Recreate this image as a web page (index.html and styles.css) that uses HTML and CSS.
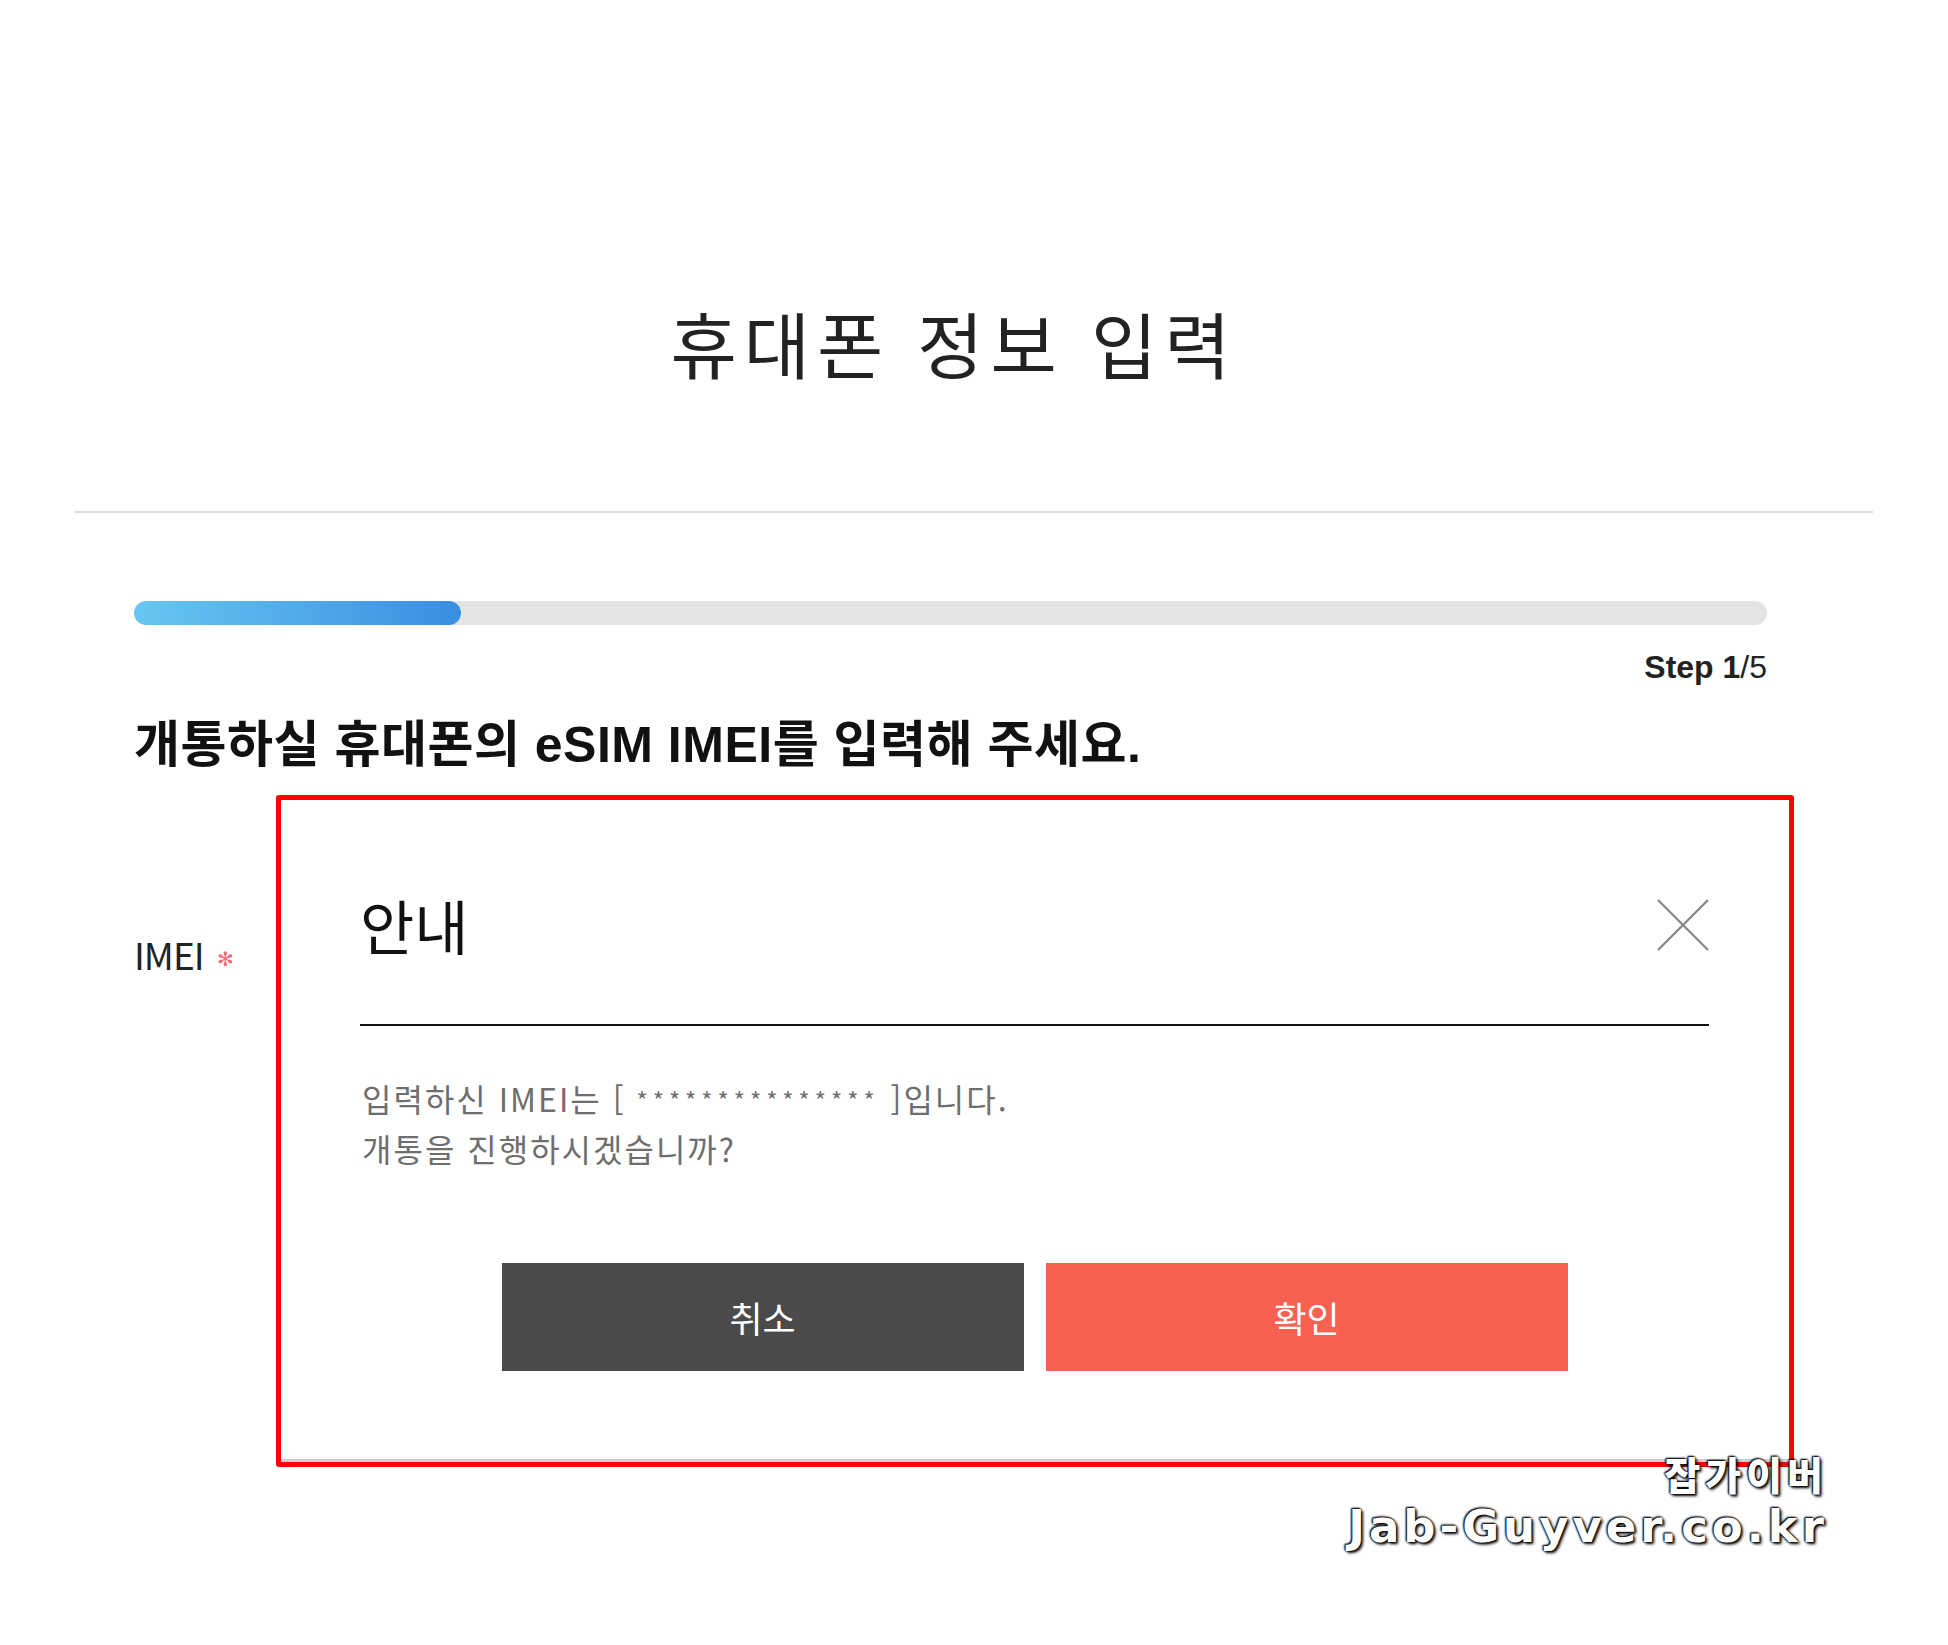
FILE: index.html
```html
<!DOCTYPE html>
<html lang="ko">
<head>
    <meta charset="utf-8">
    <meta name="viewport" content="width=device-width, initial-scale=1.0">
    <title>휴대폰 정보 입력</title>
    <link rel="stylesheet" href="styles.css">
</head>
<body>
    <div class="page">
        <!-- Page header -->
        <header class="page-header">
            <h1 class="page-title">휴대폰 정보 입력</h1>
        </header>

        <section class="step-section">
            <div class="progress">
                <div class="progress-fill" style="width: 20%;"></div>
            </div>
            <p class="step-count"><b>Step 1</b>/5</p>

            <h2 class="step-heading">개통하실 휴대폰의 eSIM IMEI를 입력해 주세요.</h2>

            <div class="field-row">
                <label class="field-label">IMEI <span class="required">✻</span></label>
            </div>
        </section>

        <!-- Confirm dialog -->
        <div class="dialog">
            <div class="dialog-inner">
                <div class="dialog-head">
                    <h3 class="dialog-title">안내</h3>
                    <button class="dialog-close" aria-label="닫기">
                        <svg width="52" height="52" viewBox="0 0 52 52">
                            <path d="M1 1 L51 51 M51 1 L1 51" stroke="#8a8a8a" stroke-width="2.4" fill="none"/>
                        </svg>
                    </button>
                </div>
                <p class="dialog-msg">
                    입력하신 IMEI는 [ <span class="mask">***************</span> ]입니다.<br>
                    개통을 진행하시겠습니까?
                </p>
                <div class="dialog-actions">
                    <button class="btn btn-cancel">취소</button>
                    <button class="btn btn-ok">확인</button>
                </div>
            </div>
        </div>

        <div class="watermark">
            <span class="wm-ko">잡가이버</span>
            <span class="wm-en">Jab-Guyver.co.kr</span>
        </div>
    </div>
</body>
</html>
```

FILE: styles.css
```css
body {
    margin: 0;
    background: #fff;
    color: #222;
    font-family: "Liberation Sans", "Noto Sans CJK KR", sans-serif;
}
.page {
    position: relative;
    width: 1948px;
    height: 1645px;
    overflow: hidden;
}
.page-header {
    margin: 0 75px;
    padding-top: 300px;
    height: 211px;
    border-bottom: 2px solid #dcdcdc;
    text-align: center;
}
.page-title {
    margin: 0 0 0 -40px;
    font-family: "Noto Sans CJK KR", sans-serif;
    font-weight: 400;
    font-size: 72px;
    line-height: 84px;
    letter-spacing: 7px;
    color: #222;
}
.step-section {
    width: 1633px;
    margin-left: 134px;
    padding-top: 88px;
}
.progress {
    height: 24px;
    border-radius: 12px;
    background: #e4e4e4;
    overflow: hidden;
}
.progress-fill {
    height: 100%;
    border-radius: 12px;
    background: linear-gradient(to right, #68c6f2, #3a8ee0);
}
.step-count {
    margin: 24px 0 0;
    text-align: right;
    font-size: 32px;
    line-height: 36px;
    color: #222;
}
.step-heading {
    margin: 32px 0 0;
    font-size: 50px;
    line-height: 56px;
    font-weight: bold;
    letter-spacing: 0.5px;
    color: #111;
}
.field-row {
    margin-top: 154px;
}
.field-label {
    font-family: "Noto Sans CJK KR", sans-serif;
    font-size: 37px;
    letter-spacing: -1px;
    color: #222;
}
.required {
    margin-left: 4px;
    font-size: 20px;
    color: #f46a78;
    vertical-align: 4px;
}

/* dialog sits over the form */
.dialog {
    position: absolute;
    left: 276px;
    top: 795px;
    width: 1508px;
    height: 662px;
    border: 5px solid #ff0000;
    border-radius: 3px;
    background: #fff;
}
.dialog-inner {
    height: 100%;
    box-sizing: border-box;
    padding: 80px 80px 0 79px;
    border-bottom: 3px solid #cfcfcf;
    font-family: "Noto Sans CJK KR", sans-serif;
}
.dialog-head {
    display: flex;
    justify-content: space-between;
    align-items: center;
    height: 90px;
    padding-bottom: 54px;
    border-bottom: 2px solid #111;
}
.dialog-title {
    margin: 0;
    font-size: 59px;
    font-weight: 400;
    line-height: 90px;
    color: #111;
}
.dialog-close {
    width: 52px;
    height: 52px;
    padding: 0;
    border: none;
    background: none;
}
.dialog-msg {
    margin: 48px 0 0 2px;
    font-size: 32px;
    line-height: 49px;
    letter-spacing: 2px;
    color: #6e6e6e;
}
.mask {
    font-size: 24px;
    letter-spacing: 5px;
    vertical-align: 2px;
}
.dialog-actions {
    display: flex;
    justify-content: center;
    gap: 22px;
    margin-top: 90px;
}
.btn {
    width: 522px;
    height: 108px;
    border: none;
    font-family: "Noto Sans CJK KR", sans-serif;
    font-size: 36px;
    color: #fff;
}
.btn-cancel {
    background: #4a4a4a;
}
.btn-ok {
    background: #f76151;
}

.watermark {
    position: absolute;
    right: 120px;
    top: 1445px;
    display: flex;
    flex-direction: column;
    align-items: flex-end;
    font-family: "DejaVu Sans", "Noto Sans CJK KR", sans-serif;
    font-weight: bold;
    color: #fff;
    text-shadow: 0 0 2px #000, 0 0 2px #000, 2px 2px 3px #000, -1px -1px 2px #000;
}
.wm-ko {
    font-family: "Noto Sans CJK KR", sans-serif;
    font-weight: 900;
    font-size: 39px;
    line-height: 56px;
    letter-spacing: 5px;
}
.wm-en {
    font-size: 45px;
    line-height: 52px;
    letter-spacing: 4px;
}
```
